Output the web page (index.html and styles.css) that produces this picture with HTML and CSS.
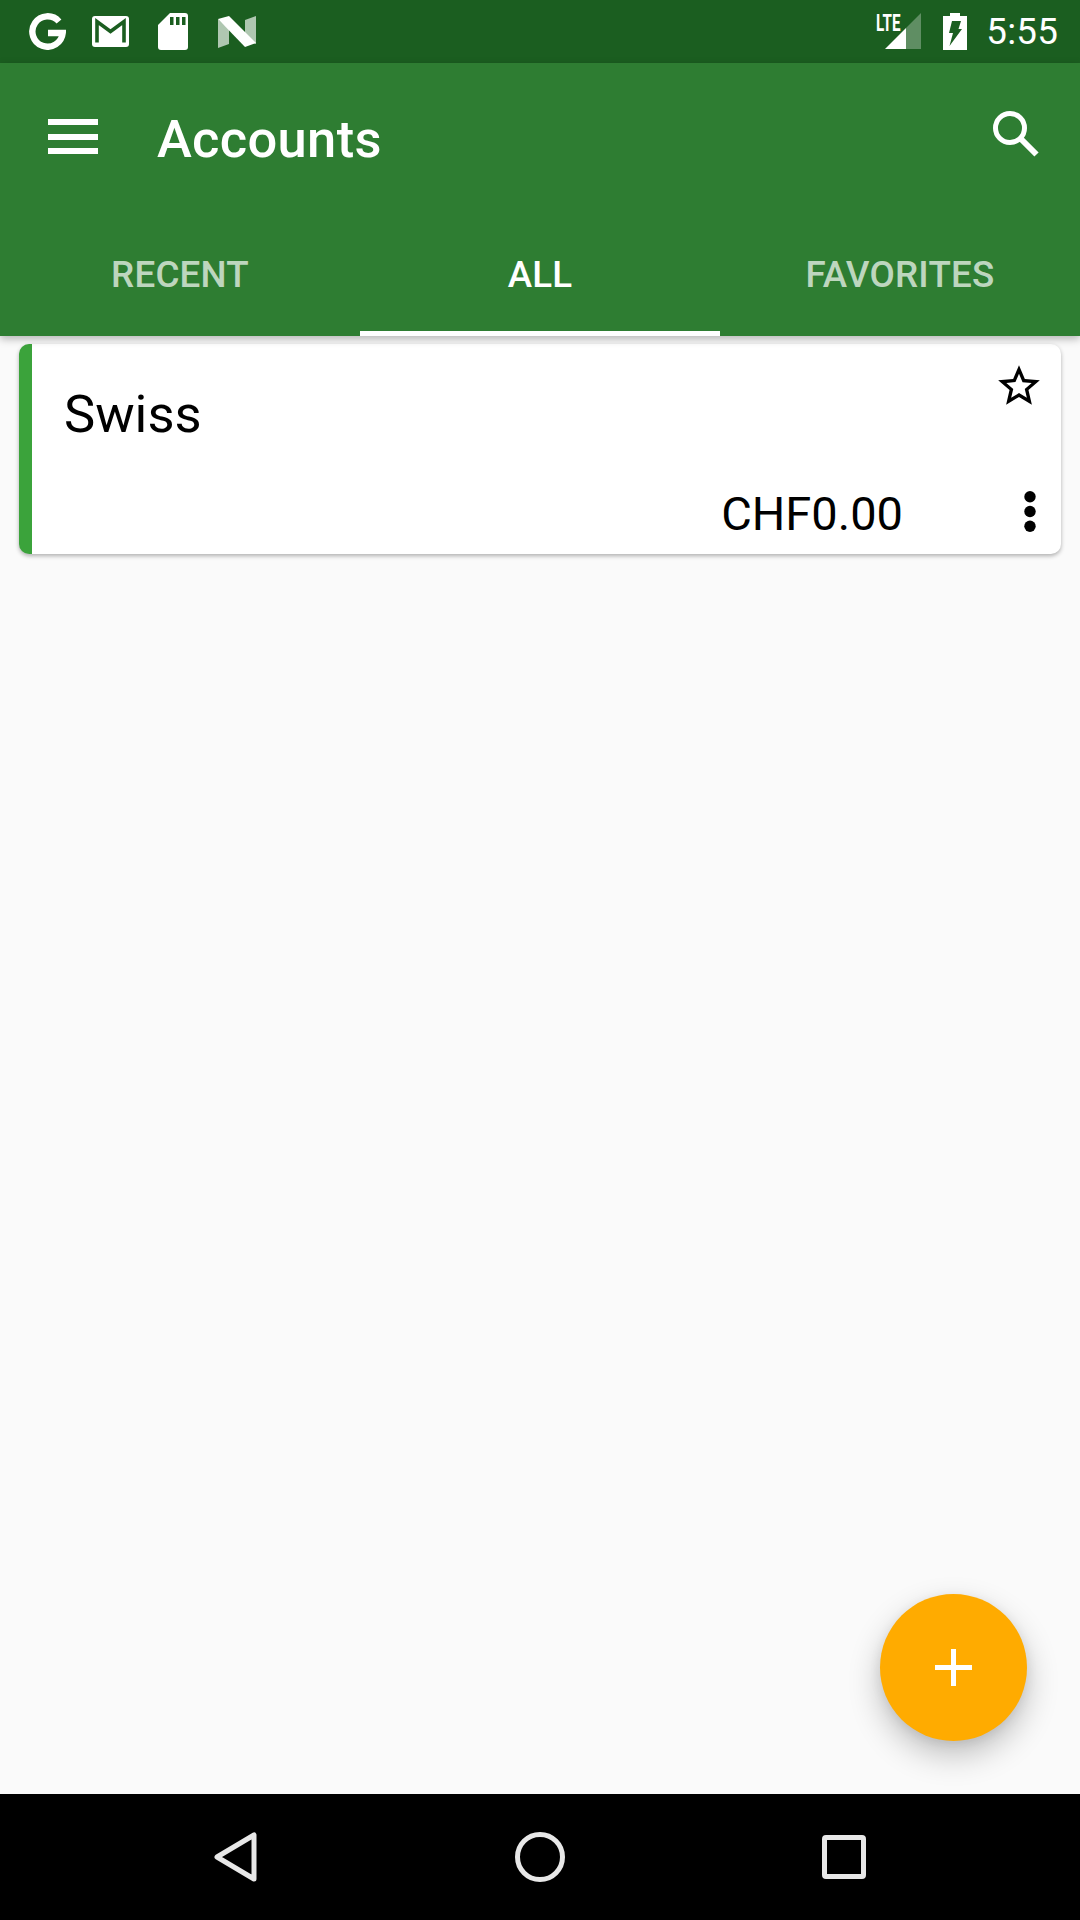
FILE: index.html
```html
<!DOCTYPE html>
<html lang="en">
<head>
    <meta charset="UTF-8">
    <meta name="viewport" content="width=device-width, initial-scale=1.0">
    <title>Accounts</title>
    <link rel="stylesheet" href="styles.css">
</head>
<body>

    <div class="status-bar">
        <div class="status-left">
            <svg class="icon-g" width="37" height="37" viewBox="0 0 37 37">
                <path d="M30 8.500A15.200 15.200 0 1 0 33.700 20H19" fill="none" stroke="#fff" stroke-width="6.400"/>
            </svg>
            <svg class="icon-mail" width="37" height="31" viewBox="0 0 37 31">
                <rect width="37" height="31" rx="3" fill="#fff"/>
                <path d="M5 26.500V5.500L18.500 15.500L32 5.500V26.500" fill="none" stroke="#1b5e20" stroke-width="3.600"/>
            </svg>
            <svg class="icon-sd" width="30" height="37" viewBox="0 0 30 37">
                <path d="M12 0H27a3 3 0 0 1 3 3V34a3 3 0 0 1-3 3H3a3 3 0 0 1-3-3V12z" fill="#fff"/>
                <path d="M12 4h3.500v8H12zM18 4h3.500v8H18zM24 4h3.500v8H24z" fill="#1b5e20"/>
            </svg>
            <svg class="icon-n" width="38" height="32" viewBox="0 0 38 32">
                <path d="M0 3V32L11 28V13z" fill="#fff" opacity="0.65"/>
                <path d="M27 4L38 0V28L27 24z" fill="#fff" opacity="0.65"/>
                <path d="M0 3L11 0L38 27L27 31z" fill="#fff"/>
            </svg>
        </div>
        <div class="status-right">
            <div class="signal">
                <svg width="36" height="37" viewBox="0 0 36 37">
                    <path d="M36 0V36H21V15z" fill="#fff" opacity="0.3"/>
                    <path d="M21 15V36H0z" fill="#fff"/>
                </svg>
                <span class="lte">LTE</span>
            </div>
            <svg class="icon-battery" width="24" height="37" viewBox="0 0 24 37">
                <path fill-rule="evenodd" d="M7 0H17V3H24V37H0V3H7zM9 8H18L15.500 16H19L6.500 33L10 20H6z" fill="#fff"/>
            </svg>
            <span class="clock">5:55</span>
        </div>
    </div>

    <header class="app-bar">
        <div class="toolbar">
            <button class="menu-btn" aria-label="Menu">
                <span></span>
                <span></span>
                <span></span>
            </button>
            <h1>Accounts</h1>
            <svg class="icon-search" width="46" height="46" viewBox="0 0 46 46">
                <circle cx="17" cy="17" r="14.500" fill="none" stroke="#fff" stroke-width="5"/>
                <path d="M27.500 27.500L43.500 43.500" stroke="#fff" stroke-width="6" fill="none"/>
            </svg>
        </div>
        <nav class="tabs">
            <a class="tab">RECENT</a>
            <a class="tab active">ALL</a>
            <a class="tab">FAVORITES</a>
        </nav>
    </header>

    <main class="content">
        <div class="card">
            <div class="card-top">
                <span class="account-name">Swiss</span>
                <svg class="icon-star" width="50" height="50" viewBox="0 0 24 24">
                    <path d="M22 9.240l-7.190-.62L12 2 9.190 8.630 2 9.240l5.460 4.730L5.820 21 12 17.270 18.180 21l-1.630-7.030L22 9.240zM12 15.400l-3.760 2.270 1-4.280-3.320-2.880 4.380-.38L12 6.100l1.710 4.040 4.380.38-3.320 2.880 1 4.280L12 15.400z"/>
                </svg>
            </div>
            <div class="card-bottom">
                <span class="amount">CHF0.00</span>
                <svg class="icon-more" width="12" height="41" viewBox="0 0 12 41">
                    <circle cx="6" cy="5.700" r="5.700"/>
                    <circle cx="6" cy="20.500" r="5.700"/>
                    <circle cx="6" cy="35.300" r="5.700"/>
                </svg>
            </div>
        </div>

        <button class="fab" aria-label="Add account">
            <svg width="37" height="37" viewBox="0 0 37 37">
                <path d="M16 0h5v16h16v5H21v16h-5V21H0v-5h16z" fill="#fff"/>
            </svg>
        </button>
    </main>

    <footer class="nav-bar">
        <div class="nav-item">
            <svg width="44" height="50" viewBox="0 0 44 50">
                <path d="M40 3V47L3 25z" fill="none" stroke="#e8e8e8" stroke-width="5" stroke-linejoin="round"/>
            </svg>
        </div>
        <div class="nav-item">
            <svg width="50" height="50" viewBox="0 0 50 50">
                <circle cx="25" cy="25" r="22.500" fill="none" stroke="#e8e8e8" stroke-width="5"/>
            </svg>
        </div>
        <div class="nav-item">
            <svg width="44" height="44" viewBox="0 0 44 44">
                <rect x="2.500" y="2.500" width="39" height="39" rx="1.500" fill="none" stroke="#e8e8e8" stroke-width="5"/>
            </svg>
        </div>
    </footer>

</body>
</html>
```

FILE: styles.css
```css
* {
    box-sizing: border-box;
}
body {
    margin: 0;
    width: 1080px;
    height: 1920px;
    display: flex;
    flex-direction: column;
    font-family: Roboto, "Liberation Sans", sans-serif;
    background-color: #fafafa;
    color: #000;
    overflow: hidden;
}
svg {
    display: block;
    flex-shrink: 0;
}

/* status bar */
.status-bar {
    height: 63px;
    flex-shrink: 0;
    display: flex;
    justify-content: space-between;
    align-items: center;
    padding: 0 22px 0 29px;
    background-color: #1b5e20;
    color: #fff;
}
.status-left,
.status-right {
    display: flex;
    align-items: center;
}
.icon-mail {
    margin-left: 26px;
}
.icon-sd {
    margin-left: 29px;
}
.icon-n {
    margin-left: 30px;
}
.signal {
    position: relative;
}
.lte {
    position: absolute;
    left: -9px;
    top: -1px;
    font-size: 23px;
    line-height: 23px;
    font-weight: 700;
    transform: scaleX(0.66);
    transform-origin: left top;
}
.icon-battery {
    margin-left: 22px;
}
.clock {
    margin-left: 19px;
    font-size: 36.750px;
    line-height: 63px;
    letter-spacing: 0.2px;
}

/* app bar */
.app-bar {
    flex-shrink: 0;
    position: relative;
    z-index: 2;
    background-color: #2e7d32;
    color: #fff;
    box-shadow: 0 3px 8px rgba(0,0,0,0.28);
}
.toolbar {
    height: 147px;
    display: flex;
    align-items: center;
    padding: 0 41px 0 48px;
}
.menu-btn {
    width: 50px;
    height: 35px;
    padding: 0;
    border: none;
    background: none;
    display: flex;
    flex-direction: column;
    justify-content: space-between;
}
.menu-btn span {
    display: block;
    height: 6px;
    background-color: #fff;
}
h1 {
    flex: 1;
    margin: 5px 0 0 59px;
    font-size: 52.500px;
    font-weight: 500;
    letter-spacing: 0.3px;
}
.icon-search {
    margin-bottom: 5px;
}
.tabs {
    height: 126px;
    display: flex;
}
.tab {
    flex: 1;
    display: flex;
    justify-content: center;
    align-items: center;
    padding-top: 2px;
    font-size: 36.750px;
    font-weight: 500;
    letter-spacing: 0.2px;
    color: rgba(255,255,255,0.7);
}
.tab.active {
    color: #fff;
    border-bottom: 5px solid #fff;
    padding-top: 7px;
}

/* account list */
.content {
    flex: 1;
    position: relative;
    padding: 8px 19px;
}
.card {
    height: 210px;
    display: flex;
    flex-direction: column;
    justify-content: space-between;
    background-color: #fff;
    border-left: 13px solid #3ba33b;
    border-radius: 10px;
    box-shadow: 0 2px 4px rgba(0,0,0,0.3);
}
.card-top {
    display: flex;
    justify-content: space-between;
    align-items: flex-start;
    padding: 17px 17px 0 32px;
}
.account-name {
    font-size: 52.500px;
    line-height: 62px;
    margin-top: 22px;
}
.card-bottom {
    display: flex;
    justify-content: flex-end;
    align-items: flex-end;
    padding: 0 25px 15px 0;
}
.amount {
    font-size: 47px;
    line-height: 50px;
}
.icon-more {
    margin: 0 0 7px 121px;
}
.fab {
    position: absolute;
    right: 53px;
    bottom: 53px;
    width: 147px;
    height: 147px;
    padding: 0;
    border: none;
    border-radius: 50%;
    background-color: #ffab00;
    display: flex;
    justify-content: center;
    align-items: center;
    box-shadow: 0 14px 32px rgba(0,0,0,0.24), 0 3px 12px rgba(0,0,0,0.08);
}

/* navigation bar */
.nav-bar {
    height: 126px;
    flex-shrink: 0;
    display: flex;
    justify-content: center;
    align-items: center;
    background-color: #000;
}
.nav-item {
    width: 304px;
    display: flex;
    justify-content: center;
}
```
